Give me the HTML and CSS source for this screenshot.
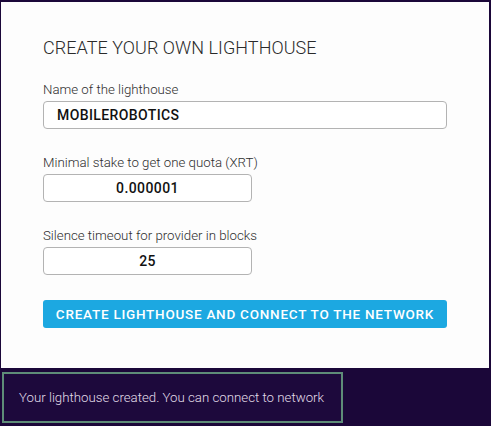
FILE: index.html
```html
<!DOCTYPE html>
<html lang="en">
<head>
<meta charset="utf-8">
<title>Create your own lighthouse</title>
<link rel="stylesheet" href="styles.css">
</head>
<body>
<div class="screen">
  <section class="panel">
    <h1 class="title">CREATE YOUR OWN LIGHTHOUSE</h1>
    <div class="field">
      <label class="label" for="name">Name of the lighthouse</label>
      <input class="input input-wide" id="name" type="text" value="MOBILEROBOTICS">
    </div>
    <div class="field">
      <label class="label" for="stake">Minimal stake to get one quota (XRT)</label>
      <input class="input input-short input-center" id="stake" type="text" value="0.000001">
    </div>
    <div class="field">
      <label class="label" for="timeout">Silence timeout for provider in blocks</label>
      <input class="input input-short input-center" id="timeout" type="text" value="25">
    </div>
    <button class="button" type="button">CREATE LIGHTHOUSE AND CONNECT TO THE NETWORK</button>
  </section>
  <div class="toast">Your lighthouse created. You can connect to network</div>
</div>
</body>
</html>
```
FILE: styles.css
```css
html, body {
  margin: 0;
  padding: 0;
  background: #1b0739;
  height: 100%;
}
body {
  font-family: Roboto, "Liberation Sans", sans-serif;
}
.screen {
  padding: 2px 2px 0 1px;
  height: 426px;
  box-sizing: border-box;
}
.panel {
  background: #fdfdfd;
  height: 366px;
  box-sizing: border-box;
  padding: 36px 42px 0 42px;
  display: flex;
  flex-direction: column;
  align-items: flex-start;
}
.title {
  margin: 0 0 24px 0;
  font-size: 18px;
  line-height: 20px;
  font-weight: 300;
  color: #2a2a2a;
  letter-spacing: 0.05px;
}
.field {
  display: flex;
  flex-direction: column;
  align-items: flex-start;
  margin-bottom: 26px;
}
.label {
  font-size: 13.25px;
  line-height: 16px;
  font-weight: 300;
  color: #2e2e2e;
  margin-bottom: 3px;
}
.input {
  box-sizing: border-box;
  height: 28px;
  border: 1px solid #b3b3b3;
  border-radius: 4px;
  background: #fff;
  font-family: Roboto, "Liberation Sans", sans-serif;
  font-size: 14px;
  font-weight: 500;
  letter-spacing: 0.4px;
  color: #111;
  padding: 0 13px;
  margin: 0;
  outline: none;
}
.input-wide { width: 404px; }
.input-short { width: 209px; }
.input-center { text-align: center; padding: 0; }
.button {
  margin-top: -1px;
  width: 404px;
  height: 28px;
  border: none;
  border-radius: 3px;
  background: #1ca8e1;
  color: #fff;
  font-family: Roboto, "Liberation Sans", sans-serif;
  font-size: 13.5px;
  font-weight: 500;
  letter-spacing: 0.75px;
  padding: 0;
  cursor: pointer;
}
.toast {
  margin: 4px 0 0 1px;
  width: 341px;
  height: 51px;
  box-sizing: border-box;
  border: 2px solid #5e8c78;
  background: #1d093c;
  color: #e2dde9;
  font-size: 13.25px;
  font-weight: 300;
  white-space: nowrap;
  padding-left: 15px;
  display: flex;
  align-items: center;
}
```
